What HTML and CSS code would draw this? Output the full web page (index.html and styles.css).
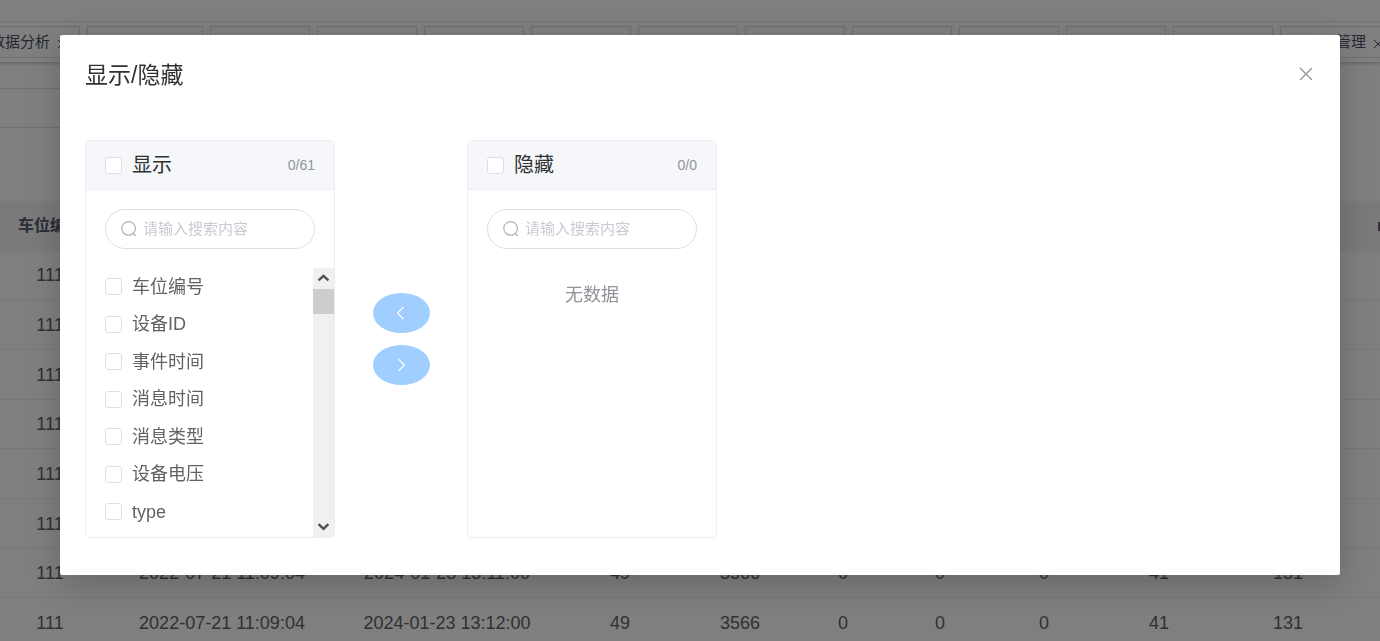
FILE: index.html
```html
<!DOCTYPE html>
<html lang="zh-CN">
<head>
<meta charset="utf-8">
<title>显示/隐藏</title>
<link rel="stylesheet" href="styles.css">
</head>
<body>
<div class="page">
  <header class="topbar"></header>
  <nav class="tabs">
    <a class="tab" href="#">数据分析<svg class="tab-x" viewBox="0 0 10 10"><path d="M1 1l8 8M9 1l-8 8"/></svg></a>
    <a class="tab tab-wide" href="#"></a>
    <a class="tab" href="#"></a>
    <a class="tab" href="#"></a>
    <a class="tab" href="#"></a>
    <a class="tab" href="#"></a>
    <a class="tab" href="#"></a>
    <a class="tab" href="#"></a>
    <a class="tab" href="#"></a>
    <a class="tab" href="#"></a>
    <a class="tab" href="#"></a>
    <a class="tab" href="#"></a>
    <a class="tab tab-wide" href="#">管理<svg class="tab-x" viewBox="0 0 10 10"><path d="M1 1l8 8M9 1l-8 8"/></svg></a>
  </nav>
  <main class="content">
    <div class="filter"></div>
    <table class="grid">
      <colgroup>
        <col class="w-100"><col class="w-244"><col class="w-206"><col class="w-140"><col class="w-100"><col class="w-106"><col class="w-88"><col class="w-120"><col class="w-110"><col class="w-148"><col>
      </colgroup>
      <thead>
        <tr><th>车位编号</th><th></th><th></th><th></th><th></th><th></th><th></th><th></th><th></th><th></th><th class="last">rssi</th></tr>
      </thead>
      <tbody>
        <tr><td>111</td><td colspan="10"></td></tr>
        <tr><td>111</td><td colspan="10"></td></tr>
        <tr><td>111</td><td colspan="10"></td></tr>
        <tr><td>111</td><td colspan="10"></td></tr>
        <tr><td>111</td><td colspan="10"></td></tr>
        <tr><td>111</td><td colspan="10"></td></tr>
        <tr><td>111</td><td>2022-07-21 11:09:04</td><td>2024-01-23 13:11:00</td><td>49</td><td>3566</td><td>0</td><td>0</td><td>0</td><td>41</td><td>131</td><td></td></tr>
        <tr><td>111</td><td>2022-07-21 11:09:04</td><td>2024-01-23 13:12:00</td><td>49</td><td>3566</td><td>0</td><td>0</td><td>0</td><td>41</td><td>131</td><td></td></tr>
      </tbody>
    </table>
  </main>
</div>

<div class="overlay">
  <section class="dialog" role="dialog" aria-modal="true" aria-labelledby="dialog-title">
    <div class="dialog-head">
      <h1 class="dialog-title" id="dialog-title">显示/隐藏</h1>
      <button class="close" type="button" aria-label="关闭"><svg class="close-icon" viewBox="0 0 14 14"><path d="M1 1l12 12M13 1L1 13"/></svg></button>
    </div>
    <div class="transfer">
      <div class="panel">
        <div class="panel-head">
          <label class="check check-all"><input class="box" type="checkbox">显示</label>
          <span class="count">0/61</span>
        </div>
        <label class="search">
          <svg class="search-icon" viewBox="0 0 16 16"><circle cx="7.6" cy="7.4" r="6.8"/><path d="M12.2 12.4l2.6 2.6"/></svg>
          <input class="search-input" type="text" placeholder="请输入搜索内容">
        </label>
        <div class="list-wrap">
          <div class="list">
            <label class="check item"><input class="box" type="checkbox">车位编号</label>
            <label class="check item"><input class="box" type="checkbox">设备ID</label>
            <label class="check item"><input class="box" type="checkbox">事件时间</label>
            <label class="check item"><input class="box" type="checkbox">消息时间</label>
            <label class="check item"><input class="box" type="checkbox">消息类型</label>
            <label class="check item"><input class="box" type="checkbox">设备电压</label>
            <label class="check item"><input class="box" type="checkbox">type</label>
          </div>
          <div class="scrollbar">
            <svg class="arrow" viewBox="0 0 21 21"><path d="M5.6 12.4l4.9-4.6 4.9 4.6"/></svg>
            <div class="track"><div class="thumb"></div></div>
            <svg class="arrow" viewBox="0 0 21 21"><path d="M5.6 8.2l4.9 4.6 4.9-4.6"/></svg>
          </div>
        </div>
      </div>
      <div class="moves">
        <button class="move" type="button" aria-label="移到左侧"><svg class="move-icon" viewBox="0 0 14 14"><path d="M8.4 1l-6 6 6 6"/></svg></button>
        <button class="move" type="button" aria-label="移到右侧"><svg class="move-icon" viewBox="0 0 14 14"><path d="M3.4 1l6 6-6 6"/></svg></button>
      </div>
      <div class="panel">
        <div class="panel-head">
          <label class="check check-all"><input class="box" type="checkbox">隐藏</label>
          <span class="count">0/0</span>
        </div>
        <label class="search">
          <svg class="search-icon" viewBox="0 0 16 16"><circle cx="7.6" cy="7.4" r="6.8"/><path d="M12.2 12.4l2.6 2.6"/></svg>
          <input class="search-input" type="text" placeholder="请输入搜索内容">
        </label>
        <p class="empty">无数据</p>
      </div>
    </div>
  </section>
</div>
</body>
</html>
```

FILE: styles.css
```css
* { box-sizing: border-box; }

body {
  margin: 0;
  overflow: hidden;
  font-family: "Liberation Sans", "Noto Sans CJK SC", sans-serif;
  line-height: 20px;
  color: #606266;
  background: #fff;
}

svg { fill: none; stroke: currentColor; }

/* Page behind the dialog */
.page { height: 100vh; overflow: hidden; }
.topbar { height: 22px; border-bottom: 1px solid #f0f0f0; }
.tabs {
  display: flex;
  gap: 7px;
  height: 41px;
  padding-top: 4px;
  margin-left: -20px;
  overflow: hidden;
  border-bottom: 1px solid #d8dce5;
  box-shadow: 0 1px 3px rgba(0, 0, 0, .2);
}
.tab {
  display: flex;
  flex: none;
  align-items: center;
  justify-content: flex-end;
  gap: 7px;
  width: 100px;
  height: 32px;
  padding-right: 12px;
  border: 1px solid #d8dce5;
  color: #495060;
  font-size: 15px;
  text-decoration: none;
  white-space: nowrap;
}
.tab-wide { width: 116px; }
.tab-x { width: 10px; height: 10px; margin-top: 4px; }

.content { padding-top: 25px; }
.filter {
  width: 50%;
  height: 40px;
  margin-bottom: 73px;
  border: solid #dcdfe6;
  border-width: 1px 0;
}
.grid {
  width: 100%;
  table-layout: fixed;
  border-collapse: separate;
  border-spacing: 0;
  font-size: 18px;
  text-align: center;
}
.grid th, .grid td {
  height: 50px;
  padding: 0;
  border-bottom: 1px solid #ebeef5;
  white-space: nowrap;
}
.grid tbody tr:nth-child(3n+1) td { height: 49px; }
.grid th { background: #f5f5f5; color: #515a6e; font-size: 16px; }
.grid .last { padding-left: 15px; overflow: hidden; text-align: left; }
.w-88 { width: 88px; }
.w-100 { width: 100px; }
.w-106 { width: 106px; }
.w-110 { width: 110px; }
.w-120 { width: 120px; }
.w-140 { width: 140px; }
.w-148 { width: 148px; }
.w-206 { width: 206px; }
.w-244 { width: 244px; }

/* Dialog */
.overlay {
  position: fixed;
  inset: 0;
  padding: 35px 40px 35px 60px;
  overflow: hidden;
  background: rgba(0, 0, 0, .5);
}
.dialog {
  border-radius: 2px;
  background: #fff;
  box-shadow: 0 10px 36px rgba(0, 0, 0, .2);
}
.dialog-head {
  display: flex;
  align-items: center;
  justify-content: space-between;
  padding: 25px 25px 13px;
}
.dialog-title {
  margin: 0;
  color: #303133;
  font-size: 23px;
  font-weight: 400;
  line-height: 30px;
}
.close {
  display: flex;
  margin-bottom: 2px;
  padding: 2px;
  border: 0;
  background: none;
  color: #909399;
}
.close-icon { width: 14px; height: 14px; stroke-width: 1.4; }

.transfer { display: flex; padding: 37px 25px; }
.panel {
  display: flex;
  flex-direction: column;
  width: 250px;
  height: 398px;
  overflow: hidden;
  border: 1px solid #ebeef5;
  border-radius: 5px;
}
.panel-head {
  display: flex;
  align-items: center;
  justify-content: space-between;
  height: 49px;
  padding: 0 19px;
  border-bottom: 1px solid #ebeef5;
  background: #f5f7fa;
}
.check { display: flex; align-items: center; gap: 10px; }
.check-all { color: #303133; font-size: 20px; }
.count { color: #909399; font-size: 14px; }
.box {
  appearance: none;
  flex: none;
  width: 17px;
  height: 17px;
  margin: 0;
  border: 1px solid #dcdfe6;
  border-radius: 3px;
  background: #fff;
}
.search {
  display: flex;
  align-items: center;
  gap: 6px;
  height: 40px;
  margin: 19px;
  padding: 0 15px;
  border: 1px solid #dcdfe6;
  border-radius: 20px;
  color: #b0b3b9;
}
.search-icon { flex: none; width: 16px; height: 16px; stroke-width: 1.2; }
.search-input {
  width: 100%;
  min-width: 0;
  padding: 0;
  border: 0;
  outline: 0;
  background: none;
  color: #606266;
  font: inherit;
  font-size: 15px;
}
.search-input::placeholder { color: #c8cbd2; }

.list-wrap { display: flex; flex: 1; min-height: 0; }
.list { flex: 1; overflow: hidden; }
.item { height: 37px; padding-left: 19px; font-size: 18px; }
.item:nth-child(even) { height: 38px; }
.scrollbar {
  display: flex;
  flex-direction: column;
  width: 21px;
  background: #f0f0f0;
  color: #505050;
}
.arrow { width: 21px; height: 21px; stroke-width: 2.4; }
.track { flex: 1; }
.thumb { height: 25px; background: #cdcdcd; }

.moves {
  display: flex;
  flex-direction: column;
  justify-content: center;
  gap: 12px;
  padding: 0 37px 0 38px;
}
.move {
  display: flex;
  align-items: center;
  justify-content: center;
  width: 57px;
  height: 40px;
  padding: 0;
  border: 0;
  border-radius: 50%;
  background: #a0cfff;
  color: #fff;
}
.move-icon { width: 14px; height: 14px; stroke-width: 1.1; }
.empty {
  margin: 8px 0 0;
  color: #909399;
  font-size: 18px;
  line-height: 38px;
  text-align: center;
}
```
